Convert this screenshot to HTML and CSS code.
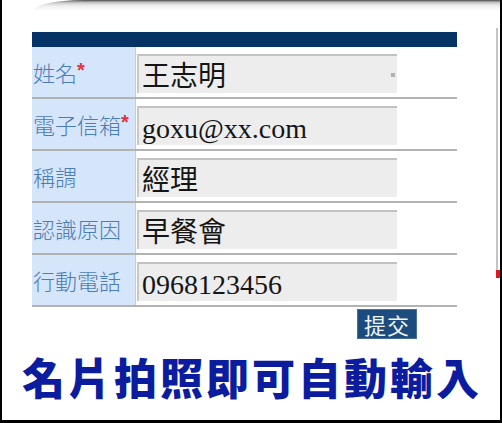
FILE: index.html
```html
<!DOCTYPE html>
<html lang="zh-Hant">
<head>
<meta charset="utf-8">
<title>名片拍照即可自動輸入</title>
<link rel="stylesheet" href="styles.css">
</head>
<body>
<div class="frame">
  <div class="curl"></div>
  <div class="side-rule"><span class="side-mark"></span></div>
  <div class="content">
    <div class="card">
      <div class="bar"></div>
      <div class="row">
        <div class="label">姓名<span class="req">*</span></div>
        <div class="cell"><div class="field">王志明<span class="dot"></span></div></div>
      </div>
      <div class="row">
        <div class="label">電子信箱<span class="req">*</span></div>
        <div class="cell"><div class="field">goxu@xx.com</div></div>
      </div>
      <div class="row">
        <div class="label">稱謂</div>
        <div class="cell"><div class="field">經理</div></div>
      </div>
      <div class="row">
        <div class="label">認識原因</div>
        <div class="cell"><div class="field">早餐會</div></div>
      </div>
      <div class="row">
        <div class="label">行動電話</div>
        <div class="cell"><div class="field">0968123456</div></div>
      </div>
    </div>
    <div class="actions"><button class="submit" type="button">提交</button></div>
    <h1 class="headline">名片拍照即可自動輸入</h1>
  </div>
</div>
</body>
</html>
```
FILE: styles.css
```css
* { box-sizing: border-box; }
html, body { margin: 0; padding: 0; background: #ffffff; }

.frame {
  position: relative;
  width: 502px;
  height: 423px;
  border-left: 2px solid #000;
  border-right: 2px solid #000;
  border-bottom: 3px solid #000;
  overflow: hidden;
}

.curl {
  position: absolute;
  left: 30px;
  right: 0;
  top: 0;
  height: 12px;
  border-top-left-radius: 60px 14px;
  background: linear-gradient(#3a3a3a 0, #8a8a8a 1px, #cfcfcf 3px, #efefef 6px, #ffffff 11px);
}

.side-rule {
  position: absolute;
  left: 494px;
  top: 28px;
  width: 2px;
  height: 242px;
  background: #c4c4c4;
}
.side-mark {
  position: absolute;
  left: 0;
  top: 242px;
  width: 6px;
  height: 8px;
  background: #e0161c;
}

.content {
  padding: 32px 0 0 30px;
}

.card {
  width: 425px;
}

.bar {
  height: 15px;
  background: #053366;
}

.row {
  display: flex;
  height: 52px;
  border-bottom: 2px solid #b2b2b2;
}

.label {
  width: 104px;
  background: #d6e6fa;
  border-right: 1px solid #c9ced6;
  padding-left: 1px;
  display: flex;
  align-items: center;
  font-family: "Noto Sans CJK TC", "Noto Sans CJK SC", sans-serif;
  font-size: 22px;
  font-weight: 300;
  color: #4a7cb6;
  white-space: nowrap;
}

.req {
  color: #e4303a;
  font-family: "Liberation Sans", sans-serif;
  font-weight: bold;
  font-size: 20px;
  align-self: flex-start;
  margin-top: 12px;
}

.cell {
  flex: 1;
  padding: 7px 0 0 1px;
}

.field {
  position: relative;
  width: 260px;
  height: 39px;
  background: #ededed;
  border-top: 2px solid #c2c2c2;
  border-left: 2px solid #c8c8c8;
  padding: 4px 0 0 3px;
  font-family: "Liberation Serif", "Noto Sans CJK TC", serif;
  font-size: 28px;
  line-height: 34px;
  color: #151515;
  white-space: nowrap;
}

.dot {
  position: absolute;
  right: 2px;
  top: 17px;
  width: 4px;
  height: 4px;
  background: #b0b0b0;
}

.actions {
  display: flex;
  justify-content: flex-end;
  width: 425px;
  padding: 2px 40px 0 0;
}

.submit {
  margin: 0;
  width: 60px;
  height: 30px;
  padding: 0;
  background: #1c4c7e;
  border: 1px solid #4a6f98;
  color: #f2f6fa;
  font-family: "Noto Sans CJK TC", sans-serif;
  font-size: 22px;
  line-height: 26px;
  letter-spacing: 1px;
}

.headline {
  margin: 12px 0 0 -10px;
  font-family: "Noto Sans CJK TC", "Noto Sans CJK SC", sans-serif;
  font-weight: 900;
  font-size: 43px;
  line-height: 50px;
  letter-spacing: 3px;
  color: #0c1c9e;
  white-space: nowrap;
}
```
